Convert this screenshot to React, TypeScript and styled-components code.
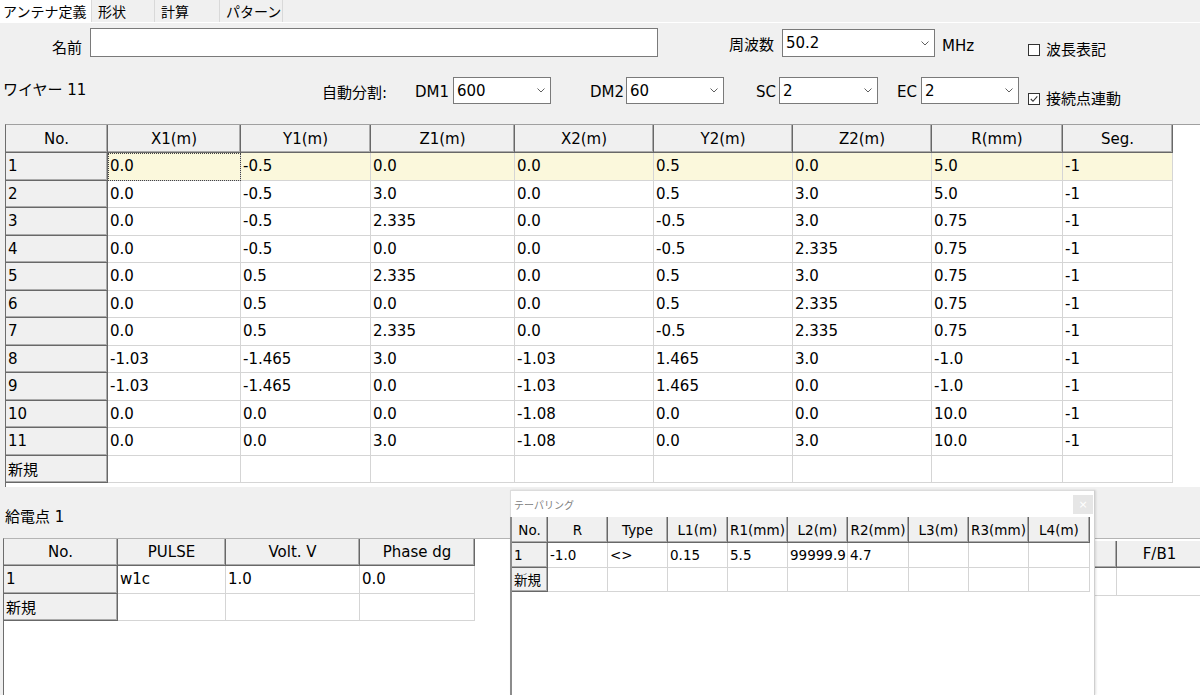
import React from "react";
import styled, { createGlobalStyle } from "styled-components";

const GlobalStyle = createGlobalStyle`
  html, body { margin: 0; padding: 0; background: #f0f0f0; }
  body {
    font-family: "DejaVu Sans", "Noto Sans CJK JP", sans-serif;
    font-size: 15px;
    color: #000;
  }
  * { box-sizing: border-box; }
`;

const Window = styled.div`
  position: relative;
  width: 1200px;
  height: 695px;
  overflow: hidden;
  background: #f0f0f0;
  display: flex;
  flex-direction: column;
`;

const TabBar = styled.div`
  display: flex;
  height: 23px;
  flex-shrink: 0;
  border-bottom: 1px solid #fff;
`;

const Tab = styled.div<{ $w: number; $active?: boolean }>`
  width: ${(p) => p.$w}px;
  height: 22px;
  padding-left: ${(p) => (p.$active ? 3 : 6)}px;
  font-family: "Noto Sans CJK JP", sans-serif;
  font-size: 14px;
  line-height: 22px;
  white-space: nowrap;
  background: ${(p) => (p.$active ? "#fff" : "#f0f0f0")};
  border-right: 1px solid #d9d9d9;
`;

const FormRow = styled.div<{ $h: number }>`
  display: flex;
  align-items: flex-start;
  height: ${(p) => p.$h}px;
  flex-shrink: 0;
`;

const Label = styled.div<{ $w?: number; $mt: number; $ml?: number; $pr?: number; $right?: boolean }>`
  flex-shrink: 0;
  width: ${(p) => (p.$w ? `${p.$w}px` : "auto")};
  margin-top: ${(p) => p.$mt}px;
  margin-left: ${(p) => p.$ml ?? 0}px;
  padding-right: ${(p) => p.$pr ?? 0}px;
  text-align: ${(p) => (p.$right ? "right" : "left")};
  line-height: 20px;
  white-space: nowrap;
`;

const TextBox = styled.div<{ $w: number; $mt: number }>`
  flex-shrink: 0;
  width: ${(p) => p.$w}px;
  height: 29px;
  margin-top: ${(p) => p.$mt}px;
  background: #fff;
  border: 1px solid #7a7a7a;
`;

const SelectBox = styled.div<{ $w: number; $h: number; $mt: number }>`
  flex-shrink: 0;
  display: flex;
  align-items: center;
  justify-content: space-between;
  width: ${(p) => p.$w}px;
  height: ${(p) => p.$h}px;
  margin-top: ${(p) => p.$mt}px;
  padding: 0 5px 0 3px;
  background: #fff;
  border: 1px solid #7a7a7a;
  line-height: 20px;
`;

const CheckWrap = styled.div<{ $mt: number; $ml: number }>`
  display: flex;
  align-items: center;
  flex-shrink: 0;
  margin-top: ${(p) => p.$mt}px;
  margin-left: ${(p) => p.$ml}px;
  line-height: 20px;
  white-space: nowrap;
`;

const CheckSquare = styled.span`
  display: inline-flex;
  width: 12px;
  height: 12px;
  margin-right: 6px;
  background: #fff;
  border: 1px solid #333;
`;

const GridPanel = styled.div`
  flex-shrink: 0;
  margin-left: 5px;
  height: 363px;
  background: #fff;
  border-left: 1px solid #6d6d6d;
  border-top: 1px solid #a0a0a0;
`;

const SectionLabel = styled.div`
  flex-shrink: 0;
  height: 51px;
  padding: 20px 0 0 5px;
  line-height: 20px;
`;

const BottomPanel = styled.div`
  flex: 1;
  display: flex;
  align-items: flex-start;
  margin-left: 3px;
  overflow: hidden;
  background: #fff;
  border-left: 1px solid #6d6d6d;
  border-top: 1px solid #b4b4b4;
`;

const RightTableWrap = styled.div`
  margin-left: auto;
  margin-top: 2px;
  margin-right: -3px;
`;

const TableBox = styled.div<{ $size: number }>`
  font-size: ${(p) => p.$size}px;
`;

const GridRow = styled.div<{ $cols: string; $h: number }>`
  display: grid;
  grid-template-columns: ${(p) => p.$cols};
  height: ${(p) => p.$h}px;
`;

const HeadCell = styled.div`
  display: flex;
  align-items: center;
  justify-content: center;
  overflow: hidden;
  white-space: nowrap;
  background: #f0f0f0;
  border-right: 1px solid #686868;
  border-bottom: 1px solid #686868;
  box-shadow: inset -1px -1px 0 #ababab;
`;

const RowHeadCell = styled.div`
  display: flex;
  align-items: center;
  padding-left: 2px;
  overflow: hidden;
  white-space: nowrap;
  background: #f0f0f0;
  border-right: 1px solid #686868;
  border-bottom: 1px solid #686868;
  box-shadow: inset -1px -1px 0 #ababab;
`;

const DataCell = styled.div<{ $hl?: boolean; $focus?: boolean }>`
  display: flex;
  align-items: center;
  padding-left: 2px;
  overflow: hidden;
  white-space: nowrap;
  background: ${(p) => (p.$hl ? "#fbf8dc" : "#fff")};
  border-right: 1px solid #d5d5d5;
  border-bottom: 1px solid #d5d5d5;
  outline: ${(p) => (p.$focus ? "1px dotted #444" : "none")};
  outline-offset: -1px;
`;

const Popup = styled.div`
  position: absolute;
  left: 510px;
  top: 490px;
  width: 585px;
  height: 205px;
  display: flex;
  flex-direction: column;
  background: #fff;
  border-top: 1px solid #dcdcdc;
  border-right: 1px solid #cfcfcf;
  box-shadow: 1px 0 2px rgba(0, 0, 0, 0.12);
`;

const PopupTitleBar = styled.div`
  display: flex;
  align-items: flex-start;
  justify-content: space-between;
  height: 26px;
  padding-left: 3px;
  border-left: 1px solid #dcdcdc;
`;

const PopupTitle = styled.div`
  margin-top: 7px;
  font-family: "Noto Sans CJK JP", sans-serif;
  font-size: 10px;
  line-height: 14px;
  color: #808080;
`;

const CloseButton = styled.div`
  width: 20px;
  height: 19px;
  margin-top: 4px;
  margin-right: 1px;
  background: #e6e6e6;
  color: #fff;
  font-size: 11px;
  line-height: 19px;
  text-align: center;
`;

const PopupBody = styled.div`
  flex: 1;
  border-left: 2px solid #8c8c8c;
`;

const Chevron = () => (
  <svg width="8" height="5" viewBox="0 0 8 5">
    <polyline points="0.5,0.5 4,4 7.5,0.5" fill="none" stroke="#606060" strokeWidth="1" />
  </svg>
);

const CheckMark = () => (
  <svg width="10" height="10" viewBox="0 0 10 10">
    <polyline points="1.8,5 4,7.3 8.3,2.3" fill="none" stroke="#333" strokeWidth="1.1" />
  </svg>
);

type TableProps = {
  cols: number[];
  head: string[];
  rows: string[][];
  headH: number;
  rowH: number;
  size: number;
  rowHead?: boolean;
  hilite?: number;
  focus?: [number, number];
};

function Table({ cols, head, rows, headH, rowH, size, rowHead = true, hilite, focus }: TableProps) {
  const tpl = cols.map((c) => `${c}px`).join(" ");
  return (
    <TableBox $size={size}>
      <GridRow $cols={tpl} $h={headH}>
        {head.map((h, i) => (
          <HeadCell key={i}>{h}</HeadCell>
        ))}
      </GridRow>
      {rows.map((r, ri) => (
        <GridRow key={ri} $cols={tpl} $h={rowH}>
          {r.map((v, ci) =>
            rowHead && ci === 0 ? (
              <RowHeadCell key={ci}>{v}</RowHeadCell>
            ) : (
              <DataCell
                key={ci}
                $hl={ri === hilite}
                $focus={!!focus && focus[0] === ri && focus[1] === ci}
              >
                {v}
              </DataCell>
            )
          )}
        </GridRow>
      ))}
    </TableBox>
  );
}

const wires: string[][] = [
  ["1", "0.0", "-0.5", "0.0", "0.0", "0.5", "0.0", "5.0", "-1"],
  ["2", "0.0", "-0.5", "3.0", "0.0", "0.5", "3.0", "5.0", "-1"],
  ["3", "0.0", "-0.5", "2.335", "0.0", "-0.5", "3.0", "0.75", "-1"],
  ["4", "0.0", "-0.5", "0.0", "0.0", "-0.5", "2.335", "0.75", "-1"],
  ["5", "0.0", "0.5", "2.335", "0.0", "0.5", "3.0", "0.75", "-1"],
  ["6", "0.0", "0.5", "0.0", "0.0", "0.5", "2.335", "0.75", "-1"],
  ["7", "0.0", "0.5", "2.335", "0.0", "-0.5", "2.335", "0.75", "-1"],
  ["8", "-1.03", "-1.465", "3.0", "-1.03", "1.465", "3.0", "-1.0", "-1"],
  ["9", "-1.03", "-1.465", "0.0", "-1.03", "1.465", "0.0", "-1.0", "-1"],
  ["10", "0.0", "0.0", "0.0", "-1.08", "0.0", "0.0", "10.0", "-1"],
  ["11", "0.0", "0.0", "3.0", "-1.08", "0.0", "3.0", "10.0", "-1"],
  ["新規", "", "", "", "", "", "", "", ""],
];

const feeds: string[][] = [
  ["1", "w1c", "1.0", "0.0"],
  ["新規", "", "", ""],
];

const tapers: string[][] = [
  ["1", "-1.0", "<>", "0.15", "5.5", "99999.9", "4.7", "", "", ""],
  ["新規", "", "", "", "", "", "", "", "", ""],
];

export default function App() {
  return (
    <Window>
      <GlobalStyle />
      <TabBar>
        <Tab $w={92} $active>アンテナ定義</Tab>
        <Tab $w={63}>形状</Tab>
        <Tab $w={65}>計算</Tab>
        <Tab $w={63}>パターン</Tab>
      </TabBar>

      <FormRow $h={43}>
        <Label $w={85} $mt={15} $pr={3} $right>名前</Label>
        <TextBox $w={568} $mt={5} style={{ marginLeft: 5 }} />
        <Label $w={124} $mt={12} $pr={8} $right>周波数</Label>
        <SelectBox $w={153} $h={28} $mt={6}>
          <span>50.2</span>
          <Chevron />
        </SelectBox>
        <Label $w={86} $mt={13} $ml={7}>MHz</Label>
        <CheckWrap $mt={17} $ml={0}>
          <CheckSquare />
          波長表記
        </CheckWrap>
      </FormRow>

      <FormRow $h={58}>
        <Label $w={319} $mt={14} $ml={3}>ワイヤー 11</Label>
        <Label $w={93} $mt={17}>自動分割:</Label>
        <Label $w={38} $mt={16}>DM1</Label>
        <SelectBox $w={98} $h={27} $mt={11}>
          <span>600</span>
          <Chevron />
        </SelectBox>
        <Label $w={36} $mt={16} $ml={39}>DM2</Label>
        <SelectBox $w={98} $h={27} $mt={11}>
          <span>60</span>
          <Chevron />
        </SelectBox>
        <Label $w={23} $mt={16} $ml={32}>SC</Label>
        <SelectBox $w={99} $h={27} $mt={11}>
          <span>2</span>
          <Chevron />
        </SelectBox>
        <Label $w={24} $mt={16} $ml={19}>EC</Label>
        <SelectBox $w={98} $h={27} $mt={11}>
          <span>2</span>
          <Chevron />
        </SelectBox>
        <CheckWrap $mt={23} $ml={9}>
          <CheckSquare>
            <CheckMark />
          </CheckSquare>
          接続点連動
        </CheckWrap>
      </FormRow>

      <GridPanel>
        <Table
          cols={[102, 133, 130, 144, 139, 139, 139, 131, 110]}
          head={["No.", "X1(m)", "Y1(m)", "Z1(m)", "X2(m)", "Y2(m)", "Z2(m)", "R(mm)", "Seg."]}
          rows={wires}
          headH={28}
          rowH={27.5}
          size={15}
          hilite={0}
          focus={[0, 1]}
        />
      </GridPanel>

      <SectionLabel>給電点 1</SectionLabel>

      <BottomPanel>
        <Table
          cols={[114, 108, 134, 115]}
          head={["No.", "PULSE", "Volt. V", "Phase dg"]}
          rows={feeds}
          headH={27}
          rowH={27.5}
          size={15}
        />
        <RightTableWrap>
          <Table
            cols={[120, 86]}
            head={["", "F/B1"]}
            rows={[["", ""]]}
            headH={27}
            rowH={28}
            size={15}
            rowHead={false}
          />
        </RightTableWrap>
      </BottomPanel>

      <Popup>
        <PopupTitleBar>
          <PopupTitle>テーパリング</PopupTitle>
          <CloseButton>×</CloseButton>
        </PopupTitleBar>
        <PopupBody>
          <Table
            cols={[36, 60, 60, 60, 60, 60, 61, 60, 60, 61]}
            head={["No.", "R", "Type", "L1(m)", "R1(mm)", "L2(m)", "R2(mm)", "L3(m)", "R3(mm)", "L4(m)"]}
            rows={tapers}
            headH={26}
            rowH={24.5}
            size={13.5}
          />
        </PopupBody>
      </Popup>
    </Window>
  );
}
